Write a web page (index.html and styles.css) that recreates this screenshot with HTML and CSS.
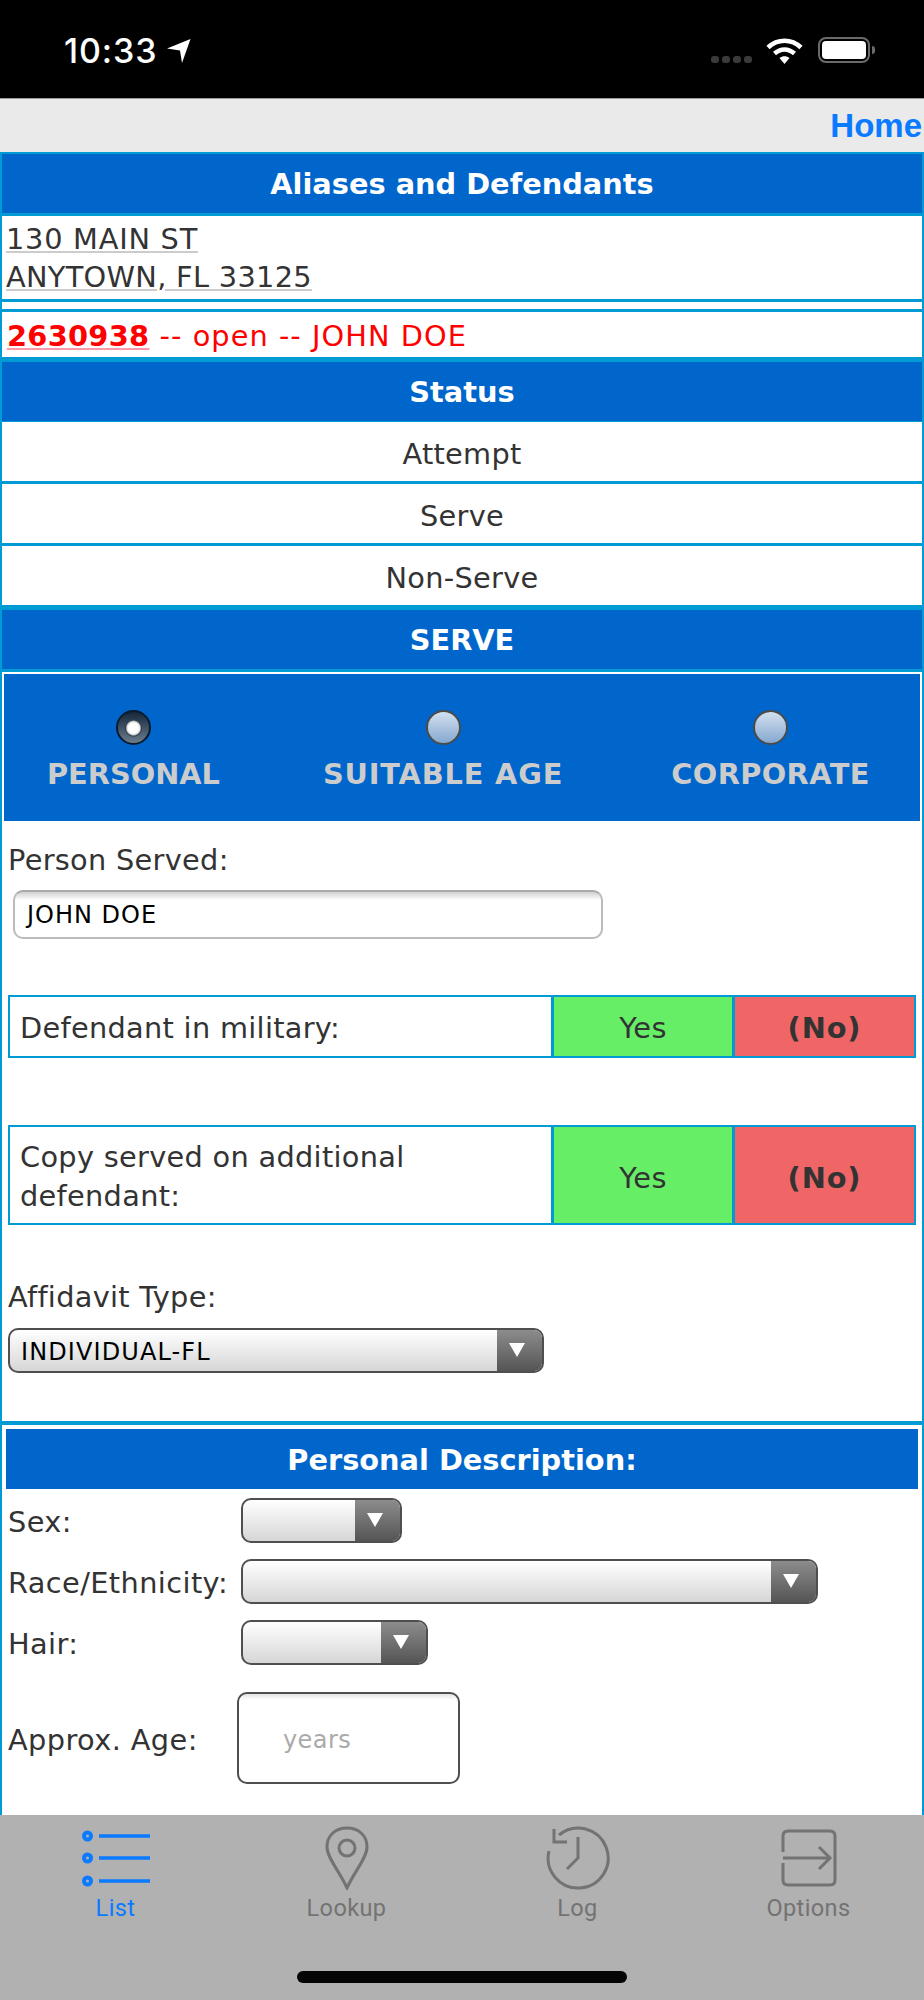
FILE: index.html
```html
<!DOCTYPE html>
<html lang="en">
<head>
<meta charset="utf-8">
<title>Serve</title>
<link rel="stylesheet" href="styles.css">
</head>
<body>
<div class="app">
  <header class="status-bar">
    <div class="clock"><span>10:33</span>
      <svg class="loc" width="24" height="24" viewBox="0 0 24 24"><path d="M0 9.500 23.500 0 15 24 13 11.500Z" fill="#fff"/></svg>
    </div>
    <div class="status-icons">
      <span class="dots"><i></i><i></i><i></i><i></i></span>
      <svg class="wifi" width="37" height="27" viewBox="0 0 37 27"><path d="M2 10.500C11.500 1.500 25.500 1.500 35 10.500" fill="none" stroke="#fff" stroke-width="4.500"/><path d="M8.500 16.500C14.500 11 22.500 11 28.500 16.500" fill="none" stroke="#fff" stroke-width="4.500"/><path d="M13.500 21 18.500 27 23.500 21C20.500 18.500 16.500 18.500 13.500 21Z" fill="#fff"/></svg>
      <span class="battery"><b></b></span>
    </div>
  </header>
  <nav class="top-bar"><a class="home" href="#">Home</a></nav>
  <main class="content">
    <div class="bar">Aliases and Defendants</div>
    <div class="row address"><a href="#"><span class="street">130 MAIN ST</span><br>ANYTOWN, FL 33125</a></div>
    <div class="row spacer"></div>
    <div class="row case"><a href="#">2630938</a> -- open -- JOHN DOE</div>
    <div class="bar status-head">Status</div>
    <div class="row option">Attempt</div>
    <div class="row option">Serve</div>
    <div class="row option">Non-Serve</div>
    <div class="bar">SERVE</div>
    <section class="serve">
      <div class="radios">
        <div class="radio-item r1"><span class="radio on"></span><span>PERSONAL</span></div>
        <div class="radio-item r2"><span class="radio"></span><span>SUITABLE AGE</span></div>
        <div class="radio-item r3"><span class="radio"></span><span>CORPORATE</span></div>
      </div>
      <div class="form">
        <label class="lbl served-lbl">Person Served:</label>
        <div class="text-input">JOHN DOE</div>
        <div class="toggle one">
          <div class="q">Defendant in military:</div>
          <div class="yes">Yes</div>
          <div class="no">(No)</div>
        </div>
        <div class="toggle two">
          <div class="q">Copy served on additional defendant:</div>
          <div class="yes">Yes</div>
          <div class="no">(No)</div>
        </div>
        <label class="lbl aff-lbl">Affidavit Type:</label>
        <div class="select aff"><span>INDIVIDUAL-FL</span><i class="arrow"></i></div>
      </div>
    </section>
    <section class="desc">
      <div class="desc-head">Personal Description:</div>
      <div class="desc-grid">
        <label class="lbl">Sex:</label>
        <div class="select sex"><span></span><i class="arrow"></i></div>
        <label class="lbl">Race/Ethnicity:</label>
        <div class="select race"><span></span><i class="arrow"></i></div>
        <label class="lbl">Hair:</label>
        <div class="select hair"><span></span><i class="arrow"></i></div>
      </div>
      <div class="age"><label class="lbl age-lbl">Approx. Age:</label><div class="age-input">years</div></div>
    </section>
  </main>
  <footer class="tabs">
    <div class="tab-row">
      <div class="tab active">
        <svg width="68" height="64" viewBox="0 0 68 64" fill="none" stroke="#0a7aff" stroke-width="3.500"><circle cx="5.500" cy="10" r="3.500" stroke-width="4"/><circle cx="5.500" cy="32" r="3.500" stroke-width="4"/><circle cx="5.500" cy="55" r="3.500" stroke-width="4"/><path d="M17 10H68M17 32H68M17 55H68"/></svg>
        <span>List</span>
      </div>
      <div class="tab">
        <svg width="44" height="64" viewBox="0 0 44 64" fill="none" stroke="#737373" stroke-width="3"><path d="M22 62C15 46 2 32 2 21C2 9 11 2 22 2S42 9 42 21C42 32 29 46 22 62Z"/><circle cx="22" cy="22" r="8"/></svg>
        <span>Lookup</span>
      </div>
      <div class="tab">
        <svg width="66" height="64" viewBox="0 0 66 64" fill="none" stroke="#737373" stroke-width="3"><path d="M14 9A30 30 0 1 1 4 25"/><path d="M9 3V16H22"/><path d="M33 11V32L22 43"/></svg>
        <span>Log</span>
      </div>
      <div class="tab">
        <svg width="56" height="64" viewBox="0 0 56 64" fill="none" stroke="#737373" stroke-width="3"><path d="M2 26V10Q2 5 7 5H49Q54 5 54 10V54Q54 59 49 59H7Q2 59 2 54V37"/><path d="M2 32H49M38 21 49 32 38 43"/></svg>
        <span>Options</span>
      </div>
    </div>
    <div class="home-indicator"></div>
  </footer>
</div>
</body>
</html>
```
FILE: styles.css
```css
* { box-sizing: border-box; }
html, body { margin: 0; padding: 0; }
body { width: 924px; height: 2000px; overflow: hidden; background: #fff; font-family: "DejaVu Sans", Verdana, sans-serif; color: #333; }
.app { display: flex; flex-direction: column; height: 2000px; overflow: hidden; }

.status-bar { flex: none; height: 98px; background: #000; display: flex; justify-content: space-between; padding: 33px 54px 0 64px; color: #fff; }
.clock { display: flex; align-items: flex-start; gap: 9px; font: 500 34px/36px Inter, "Liberation Sans", sans-serif; letter-spacing: .9px; }
.loc { margin-top: 6px; }
.status-icons { display: flex; align-items: flex-start; }
.dots { display: flex; gap: 3px; margin: 23px 14px 0 0; }
.dots i { width: 8px; height: 7px; border-radius: 3px; background: #3a3a3a; }
.wifi { margin-top: 4px; }
.battery { position: relative; display: block; width: 52px; height: 26px; border: 2px solid #6a6a6a; border-radius: 8px; margin: 4px 0 0 15px; }
.battery::after { content: ""; position: absolute; right: -7px; top: 7px; width: 3px; height: 8px; border-radius: 0 3px 3px 0; background: #6a6a6a; }
.battery b { display: block; margin: 2px; height: 18px; border-radius: 4px; background: #fff; }

.top-bar { flex: none; height: 54px; background: #eaeaea; border-top: 1px solid #999; display: flex; justify-content: flex-end; align-items: center; }
.home { font: bold 33px/1 "Liberation Sans", Arial, sans-serif; color: #0a7aff; text-decoration: none; padding-right: 2px; }

.content { flex: 1; min-height: 0; overflow: hidden; background: #fff; border: solid #009ad5; border-width: 0 2px; font-size: 28.800px; letter-spacing: .3px; }
.bar { margin: 0 -2px; height: 64px; background: #0066cc; border: solid #009ad5; border-width: 2px 2px 3px; color: #fff; font-weight: bold; font-size: 28.800px; letter-spacing: 0; line-height: 61px; text-align: center; }
.row { margin: 0 -2px; border: solid #009ad5; border-width: 0 2px 3px; background: #fff; }
.status-head + .row { margin-top: -2px; }
.address { padding: 4px 4px 0; height: 86px; line-height: 38px; }
.address a { color: #333; text-decoration: underline; text-decoration-color: #ccc; }
.street { letter-spacing: .75px; }
.spacer { height: 10px; }
.case { height: 48px; padding-left: 5px; line-height: 49px; color: #f00; letter-spacing: 1.050px; }
.case a { color: #f00; font-weight: bold; letter-spacing: .3px; text-decoration: underline; text-decoration-color: #f9a; }
.option { height: 62px; text-align: center; line-height: 65px; }

.serve { padding: 2px 2px 0; height: 753px; border: solid #009ad5; border-width: 0 2px 4px; margin: 0 -2px; }
.radios { height: 147px; background: #0066cc; display: flex; color: #ccc; font-weight: bold; letter-spacing: 0; }
.radio-item { display: flex; flex-direction: column; align-items: center; padding-top: 36px; gap: 11px; line-height: 36px; }
.r1 { margin-left: 43px; }
.r2 { margin-left: 103px; letter-spacing: .85px; }
.r3 { margin-left: 108px; letter-spacing: .4px; }
.radio { width: 35px; height: 35px; border-radius: 50%; border: 2px solid #4a4a4a; background: linear-gradient(#d2e0ef, #86a8cf); }
.radio.on { border: 2px solid #091a2c; background: radial-gradient(circle at 50% 52%, #fff 0 5px, #ddd 6.500px, #2f3f50 8px, transparent 9px), linear-gradient(#14273c, #6c7c8c); }

.form { padding: 0 4px; }
.lbl { line-height: 34px; color: #333; }
.served-lbl { display: block; margin-top: 22px; }
.text-input { margin: 13px 0 0 5px; width: 590px; height: 49px; border: 2px solid #bbb; border-top-color: #aaa; border-radius: 10px; background: linear-gradient(#d0d0d0, #fff 8px); color: #000; font-size: 24px; letter-spacing: 1px; line-height: 46px; padding-left: 12px; }

.toggle { display: grid; grid-template-columns: 541px 181px 182px; width: 908px; border: 2px solid #009ad5; }
.toggle > div { display: flex; align-items: center; }
.one { height: 63px; margin-top: 56px; }
.two { height: 100px; margin-top: 67px; }
.q { padding: 3px 10px 0; line-height: 39px; background: #fff; }
.yes, .no { justify-content: center; border-left: 3px solid #009ad5; padding-top: 2px; }
.two .yes, .two .no { padding-top: 5px; }
.yes { background: #66ef66; }
.no { background: #f06666; font-weight: bold; letter-spacing: .9px; }

.aff-lbl { display: block; margin-top: 55px; }
.select { display: flex; height: 45px; border: 2px solid #4f4f4f; border-radius: 10px; background: linear-gradient(#fff, #d6d6d6); overflow: hidden; color: #000; font-size: 24px; letter-spacing: 1.100px; }
.select span { flex: 1; padding-left: 11px; line-height: 44px; }
.arrow { flex: none; width: 45px; background: linear-gradient(#8c8c8c, #555); position: relative; }
.arrow::after { content: ""; position: absolute; left: 12px; top: 13px; border: solid transparent; border-width: 14px 8px 0; border-top-color: #fff; }
.aff { width: 536px; margin-top: 14px; }

.desc { padding: 4px 4px 0; margin: 0 -2px; border: solid #009ad5; border-width: 0 2px; }
.desc-head { height: 60px; background: #0066cc; color: #fff; font-weight: bold; letter-spacing: 0; line-height: 63px; text-align: center; }
.desc-grid { display: grid; grid-template-columns: 235px auto; justify-items: start; align-items: center; row-gap: 16px; margin-top: 9px; }
.desc .lbl { padding: 3px 0 0 2px; letter-spacing: .4px; }
.sex { width: 161px; }
.race { width: 577px; }
.hair { width: 187px; }
.age { display: flex; align-items: center; margin-top: 27px; }
.age-lbl { width: 231px; flex: none; }
.age-input { width: 223px; height: 92px; border: 2px solid #4f4f4f; border-radius: 10px; background: linear-gradient(#e4e4e4, #fff 6px); color: #aaa; font-size: 24px; letter-spacing: .4px; line-height: 92px; padding-left: 44px; }

.tabs { flex: none; height: 185px; background: #b1b1b1; }
.tab-row { display: flex; height: 124px; padding-top: 11px; }
.tab { flex: 1; display: flex; flex-direction: column; align-items: center; gap: 5px; color: #737373; font: 23.500px/26px Roboto, "Noto Sans", sans-serif; letter-spacing: .4px; }
.tab svg { flex: none; }
.tab.active { color: #0a7aff; }
.home-indicator { width: 330px; height: 12px; border-radius: 6px; background: #050505; margin: 32px auto 0; }
```
